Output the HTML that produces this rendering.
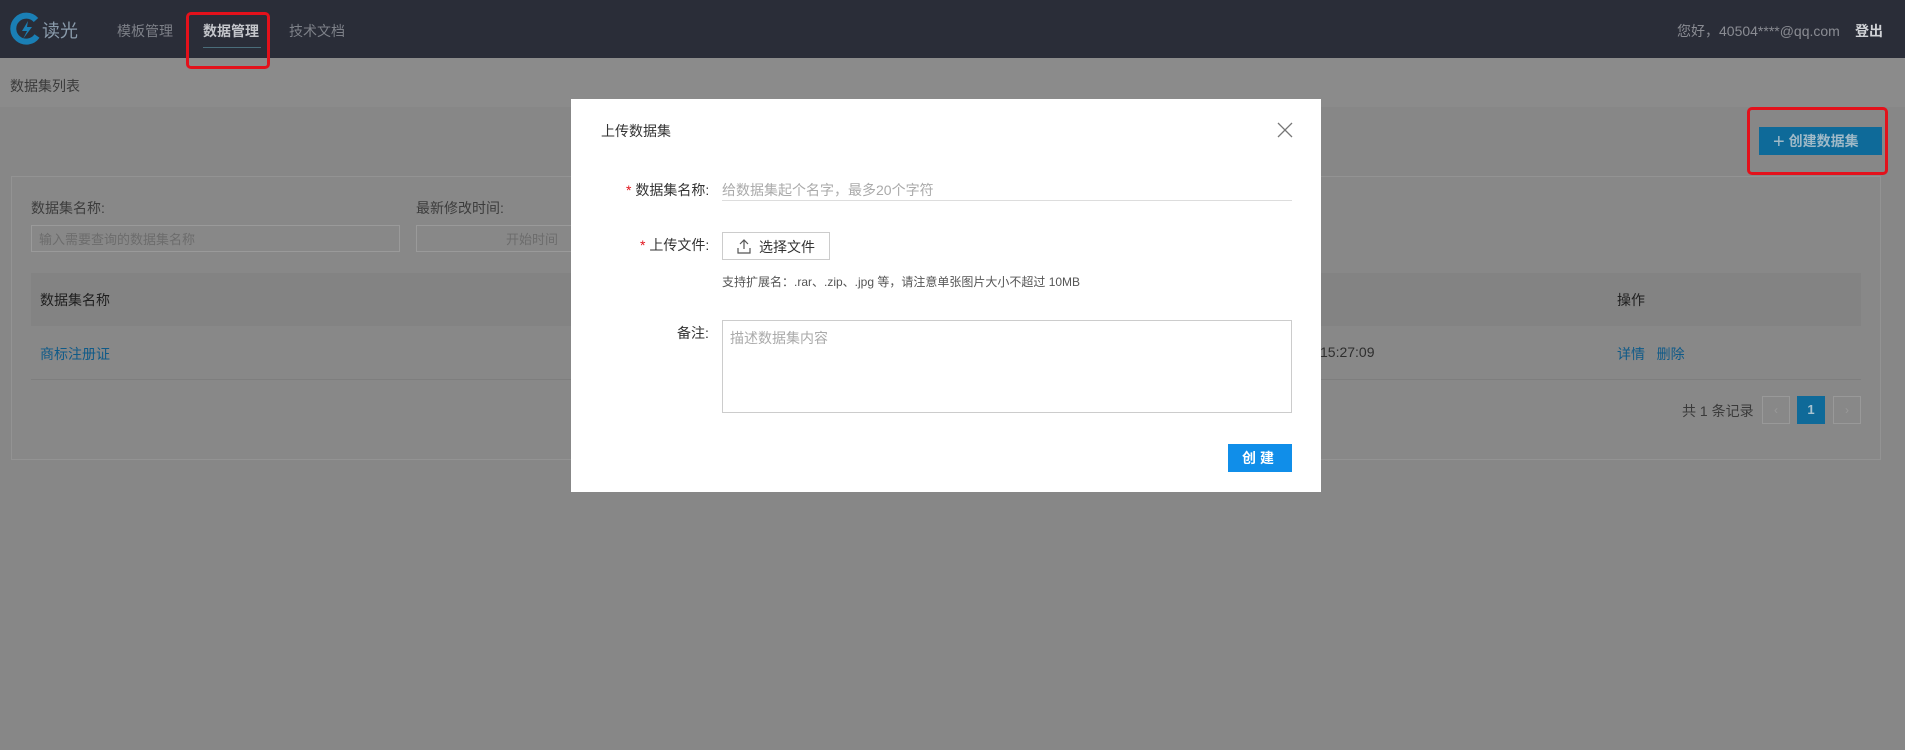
<!DOCTYPE html>
<html><head><meta charset="utf-8"><style>
*{box-sizing:border-box;margin:0;padding:0}
body{width:1905px;height:750px;background:#878787;font-family:"Liberation Sans","Noto Sans CJK SC",sans-serif;position:relative;overflow:hidden;font-size:14px}
.a{position:absolute;white-space:nowrap}
</style></head><body>
<div class="a" style="left:0;top:0;width:1905px;height:58px;background:#2a2d38"></div>
<div class="a" style="left:0;top:58px;width:1905px;height:49px;background:#8b8b8b"></div>
<svg class="a" style="left:10px;top:12px" width="32" height="34" viewBox="0 0 32 34"><path d="M26 8 A13 13 0 1 0 27 24" fill="none" stroke="#1a7fb5" stroke-width="6"/><path d="M18 9 L12 19 L17 19 L13 27 L22 15 L17 15 Z" fill="#1a7fb5"/></svg>
<div class="a" style="left:42px;top:17px;font-size:18px;color:#8a9bab">读光</div>
<div class="a" style="left:117px;top:21px;font-size:14px;color:#7d8088">模板管理</div>
<div class="a" style="left:203px;top:21px;font-size:14px;color:#c4c6cb;font-weight:bold">数据管理</div>
<div class="a" style="left:203px;top:47px;width:58px;height:1px;background:#4a6d7a"></div>
<div class="a" style="left:289px;top:21px;font-size:14px;color:#7d8088">技术文档</div>
<div class="a" style="left:186px;top:12px;width:84px;height:57px;border:3px solid #e3111b;border-radius:5px"></div>
<div class="a" style="left:1677px;top:21px;font-size:14px;color:#8a8c93">您好，40504****@qq.com</div>
<div class="a" style="left:1855px;top:21px;font-size:14px;color:#d0d2d6;font-weight:bold">登出</div>
<div class="a" style="left:10px;top:76px;font-size:14px;color:#3a3a3a">数据集列表</div>
<div class="a" style="left:1759px;top:127px;width:123px;height:28px;background:#0e6a99;color:#9fb9c7;font-size:14px;font-weight:bold;line-height:28px;padding-left:14px"><span style="font-size:20px;font-weight:normal;vertical-align:-2px">+</span> 创建数据集</div>
<div class="a" style="left:1747px;top:107px;width:141px;height:68px;border:3px solid #e3111b;border-radius:5px"></div>
<div class="a" style="left:11px;top:176px;width:1870px;height:284px;border:1px solid #939393;background:#888"></div>
<div class="a" style="left:31px;top:198px;font-size:14px;color:#3c3c3c">数据集名称:</div>
<div class="a" style="left:416px;top:198px;font-size:14px;color:#3c3c3c">最新修改时间:</div>
<div class="a" style="left:31px;top:225px;width:369px;height:27px;border:1px solid #9a9a9a;font-size:13px;color:#6c6c6c;padding:3px 7px">输入需要查询的数据集名称</div>
<div class="a" style="left:416px;top:225px;width:170px;height:27px;border:1px solid #9a9a9a;font-size:13px;color:#6c6c6c;padding:3px 0 0 89px">开始时间</div>
<div class="a" style="left:31px;top:273px;width:1830px;height:53px;background:#838383"></div>
<div class="a" style="left:40px;top:290px;font-size:14px;color:#1e1e1e">数据集名称</div>
<div class="a" style="left:1617px;top:290px;font-size:14px;color:#1e1e1e">操作</div>
<div class="a" style="left:40px;top:344px;font-size:14px;color:#0f5a88">商标注册证</div>
<div class="a" style="left:1320px;top:344px;font-size:14px;color:#2e2e2e">15:27:09</div>
<div class="a" style="left:1617px;top:344px;font-size:14px;color:#0f5a88">详情&nbsp;&nbsp;&nbsp;删除</div>
<div class="a" style="left:31px;top:379px;width:1830px;height:1px;background:#7e7e7e"></div>
<div class="a" style="left:1682px;top:401px;font-size:14px;color:#3a3a3a">共 1 条记录</div>
<div class="a" style="left:1762px;top:396px;width:28px;height:28px;border:1px solid #999;color:#999;text-align:center;line-height:26px;font-size:12px">‹</div>
<div class="a" style="left:1797px;top:396px;width:28px;height:28px;background:#0f6a99;color:#a9c3d0;text-align:center;line-height:28px;font-size:13px;font-weight:bold">1</div>
<div class="a" style="left:1833px;top:396px;width:28px;height:28px;border:1px solid #999;color:#999;text-align:center;line-height:26px;font-size:12px">›</div>

<div class="a" style="left:571px;top:99px;width:750px;height:393px;background:#fff"></div>
<div class="a" style="left:601px;top:121px;font-size:14px;color:#333">上传数据集</div>
<svg class="a" style="left:1277px;top:122px" width="16" height="16" viewBox="0 0 16 16"><path d="M1 1L15 15M15 1L1 15" stroke="#777" stroke-width="1.3"/></svg>
<div class="a" style="left:626px;top:180px;font-size:14px;color:#333"><span style="color:#e0131b">*</span> 数据集名称:</div>
<div class="a" style="left:722px;top:180px;font-size:14px;color:#aaa">给数据集起个名字，最多20个字符</div>
<div class="a" style="left:722px;top:200px;width:570px;height:1px;background:#ddd"></div>
<div class="a" style="left:640px;top:235px;font-size:14px;color:#333"><span style="color:#e0131b">*</span> 上传文件:</div>
<div class="a" style="left:722px;top:232px;width:108px;height:28px;border:1px solid #ccc;font-size:14px;color:#333;padding:4px 0 0 36px">选择文件</div>
<svg class="a" style="left:737px;top:238px" width="14" height="16" viewBox="0 0 14 16"><path d="M7 2V11M3 6L7 2L11 6M1 10V15H13V10" fill="none" stroke="#555" stroke-width="1.2"/></svg>
<div class="a" style="left:722px;top:273px;font-size:12px;color:#555">支持扩展名：.rar、.zip、.jpg 等，请注意单张图片大小不超过 10MB</div>
<div class="a" style="left:677px;top:323px;font-size:14px;color:#333">备注:</div>
<div class="a" style="left:722px;top:320px;width:570px;height:93px;border:1px solid #ccc;font-size:14px;color:#aaa;padding:7px 7px">描述数据集内容</div>
<div class="a" style="left:1228px;top:444px;width:64px;height:28px;background:#108ee9;color:#fff;font-size:14px;font-weight:bold;text-align:center;line-height:28px;letter-spacing:4px">创建</div>
</body></html>
